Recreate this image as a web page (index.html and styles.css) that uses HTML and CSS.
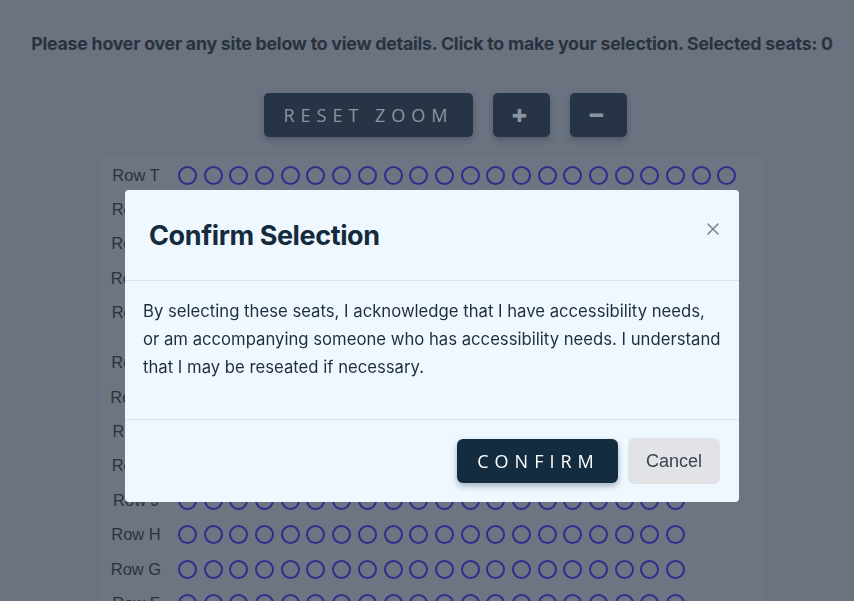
FILE: index.html
```html
<!DOCTYPE html>
<html lang="en">
<head>
<meta charset="utf-8">
<title>Seat selection</title>
<link rel="stylesheet" href="styles.css">
</head>
<body>
<main class="page">
  <p class="instructions">Please hover over any site below to view details. Click to make your selection. Selected seats: 0</p>
  <div class="controls">
    <button class="ctrl ctrl-reset">RESET ZOOM</button>
    <button class="ctrl ctrl-icon">+</button>
    <button class="ctrl ctrl-icon">&minus;</button>
  </div>
  <section class="seatmap">
    <div class="row"><span class="label">Row T</span><span class="seats"><i></i><i></i><i></i><i></i><i></i><i></i><i></i><i></i><i></i><i></i><i></i><i></i><i></i><i></i><i></i><i></i><i></i><i></i><i></i><i></i><i></i><i></i></span></div>
    <div class="row"><span class="label">Row S</span><span class="seats"><i></i><i></i><i></i><i></i><i></i><i></i><i></i><i></i><i></i><i></i><i></i><i></i><i></i><i></i><i></i><i></i><i></i><i></i><i></i><i></i><i></i><i></i></span></div>
    <div class="row"><span class="label">Row R</span><span class="seats"><i></i><i></i><i></i><i></i><i></i><i></i><i></i><i></i><i></i><i></i><i></i><i></i><i></i><i></i><i></i><i></i><i></i><i></i><i></i><i></i><i></i><i></i></span></div>
    <div class="row"><span class="label">Row Q</span><span class="seats"><i></i><i></i><i></i><i></i><i></i><i></i><i></i><i></i><i></i><i></i><i></i><i></i><i></i><i></i><i></i><i></i><i></i><i></i><i></i><i></i><i></i><i></i></span></div>
    <div class="row"><span class="label">Row P</span><span class="seats"><i></i><i></i><i></i><i></i><i></i><i></i><i></i><i></i><i></i><i></i><i></i><i></i><i></i><i></i><i></i><i></i><i></i><i></i><i></i><i></i><i></i><i></i></span></div>
    <div class="row row-aisle"><span class="label">Row N</span><span class="seats"><i></i><i></i><i></i><i></i><i></i><i></i><i></i><i></i><i></i><i></i><i></i><i></i><i></i><i></i><i></i><i></i><i></i><i></i><i></i><i></i></span></div>
    <div class="row"><span class="label">Row M</span><span class="seats"><i></i><i></i><i></i><i></i><i></i><i></i><i></i><i></i><i></i><i></i><i></i><i></i><i></i><i></i><i></i><i></i><i></i><i></i><i></i><i></i></span></div>
    <div class="row"><span class="label">Row L</span><span class="seats"><i></i><i></i><i></i><i></i><i></i><i></i><i></i><i></i><i></i><i></i><i></i><i></i><i></i><i></i><i></i><i></i><i></i><i></i><i></i><i></i></span></div>
    <div class="row"><span class="label">Row K</span><span class="seats"><i></i><i></i><i></i><i></i><i></i><i></i><i></i><i></i><i></i><i></i><i></i><i></i><i></i><i></i><i></i><i></i><i></i><i></i><i></i><i></i></span></div>
    <div class="row"><span class="label">Row J</span><span class="seats"><i></i><i></i><i></i><i></i><i></i><i></i><i></i><i></i><i></i><i></i><i></i><i></i><i></i><i></i><i></i><i></i><i></i><i></i><i></i><i></i></span></div>
    <div class="row"><span class="label">Row H</span><span class="seats"><i></i><i></i><i></i><i></i><i></i><i></i><i></i><i></i><i></i><i></i><i></i><i></i><i></i><i></i><i></i><i></i><i></i><i></i><i></i><i></i></span></div>
    <div class="row"><span class="label">Row G</span><span class="seats"><i></i><i></i><i></i><i></i><i></i><i></i><i></i><i></i><i></i><i></i><i></i><i></i><i></i><i></i><i></i><i></i><i></i><i></i><i></i><i></i></span></div>
    <div class="row"><span class="label">Row F</span><span class="seats"><i></i><i></i><i></i><i></i><i></i><i></i><i></i><i></i><i></i><i></i><i></i><i></i><i></i><i></i><i></i><i></i><i></i><i></i><i></i><i></i></span></div>
  </section>
</main>

<div class="modal" role="dialog" aria-labelledby="modal-title">
  <header class="modal-header">
    <h2 id="modal-title" class="modal-title">Confirm Selection</h2>
    <button class="modal-close" aria-label="Close">
      <svg width="12" height="12" viewBox="0 0 12 12"><path d="M1 1L11 11M11 1L1 11" stroke="currentColor" stroke-width="1.6" stroke-linecap="round"/></svg>
    </button>
  </header>
  <div class="modal-body">
    <p>By selecting these seats, I acknowledge that I have accessibility needs, or am accompanying someone who has accessibility needs. I understand that I may be reseated if necessary.</p>
  </div>
  <footer class="modal-footer">
    <button class="btn-confirm">CONFIRM</button>
    <button class="btn-cancel">Cancel</button>
  </footer>
</div>
</body>
</html>
```
FILE: styles.css
```css
* { box-sizing: border-box; }
html, body { margin: 0; height: 100%; overflow: hidden; }
body {
  background: #6b7280;
  font-family: "Inter", "Liberation Sans", Arial, sans-serif;
}
.page { padding-top: 34px; }
.instructions {
  margin: 0;
  padding-left: 10px;
  text-align: center;
  font-weight: 700;
  font-size: 17.8px;
  letter-spacing: -0.25px;
  line-height: 20px;
  color: #29333f;
}
.controls {
  display: flex;
  justify-content: center;
  gap: 20px;
  margin-top: 39px;
  padding-left: 37px;
}
.ctrl {
  height: 44px;
  border: 0;
  border-radius: 5px;
  background: #263445;
  color: #8b94a0;
  font-family: "Open Sans", sans-serif;
  box-shadow: 0 3px 6px rgba(40, 46, 60, 0.35);
}
.ctrl-reset {
  width: 209px;
  font-size: 18px;
  letter-spacing: 6px;
  padding-left: 6px;
}
.ctrl-icon {
  width: 57px;
  font-size: 27px;
  font-weight: 800;
  line-height: 44px;
  padding: 0 4px 0 0;
}
.seatmap {
  margin: 20px 0 0 100px;
  width: 665px;
  padding-top: 1px;
  background: #6e7481;
}
.row {
  display: flex;
  align-items: center;
  height: 34.4px;
}
.row-aisle { margin-top: 15.6px; }
.label {
  width: 64px;
  margin-left: 4px;
  text-align: center;
  font-family: "Liberation Sans", Arial, sans-serif;
  font-size: 16.5px;
  color: #2b323d;
  flex: none;
}
.seats {
  display: flex;
  gap: 6.7px;
  margin-left: 10px;
}
.seats i {
  width: 19px;
  height: 19px;
  border: 2px solid #2c2f8c;
  border-radius: 50%;
  flex: none;
}

.modal {
  position: fixed;
  top: 190px;
  left: 125px;
  width: 614px;
  height: 312px;
  background: #f0f8ff;
  border-radius: 4px;
  display: flex;
  flex-direction: column;
}
.modal-header {
  height: 91px;
  border-bottom: 1px solid #dce3e9;
  display: flex;
  align-items: center;
  justify-content: space-between;
  padding: 0 20px 0 24px;
}
.modal-title {
  margin: 0;
  font-family: "Inter", sans-serif;
  font-weight: 700;
  font-size: 27px;
  letter-spacing: -0.4px;
  color: #142b3e;
}
.modal-close {
  border: 0;
  background: none;
  padding: 0;
  color: #7b8791;
  margin-top: -12px;
  display: flex;
}
.modal-body {
  height: 139px;
  border-bottom: 1px solid #dce3e9;
  padding: 16px 18px 0 18px;
}
.modal-body p {
  margin: 0;
  font-size: 16.7px;
  line-height: 28px;
  color: #1e2e3f;
}
.modal-footer {
  flex: 1;
  display: flex;
  justify-content: flex-end;
  align-items: center;
  gap: 10px;
  padding: 0 19px 0 0;
}
.btn-confirm {
  width: 161px;
  height: 44px;
  border: 0;
  border-radius: 6px;
  background: #132c40;
  color: #ffffff;
  font-family: "Open Sans", sans-serif;
  font-size: 18px;
  letter-spacing: 6px;
  padding-left: 8px;
  box-shadow: 0 3px 6px rgba(19, 44, 64, 0.35);
}
.btn-cancel {
  width: 92px;
  height: 46px;
  border: 0;
  border-radius: 6px;
  background: #e1e3e7;
  color: #3b4250;
  font-family: "Liberation Sans", Arial, sans-serif;
  font-size: 18px;
}
```
